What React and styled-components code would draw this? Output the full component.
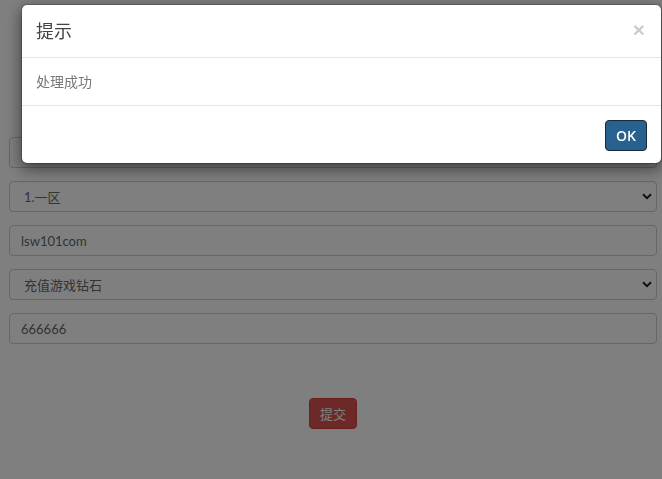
import styled, { createGlobalStyle } from 'styled-components';

const GlobalStyle = createGlobalStyle`
  html, body {
    margin: 0;
    padding: 0;
    background: #fff;
    font-family: Lato, "Noto Sans CJK SC", sans-serif;
    font-size: 14px;
    color: #555;
  }
  * { box-sizing: border-box; }
`;

const Chevron = () => (
  <ChevronIcon width="10" height="7" viewBox="0 0 10 7">
    <path d="M1 1.2 L5 5.2 L9 1.2" fill="none" stroke="#222" strokeWidth="2" />
  </ChevronIcon>
);

const App = () => {
  return (
    <>
      <GlobalStyle />
      <Page>
        <Field defaultValue="" />
        <SelectWrap>
          <Select defaultValue="1">
            <option value="1">1.一区</option>
          </Select>
          <Chevron />
        </SelectWrap>
        <Field defaultValue="lsw101com" />
        <SelectWrap>
          <Select defaultValue="d">
            <option value="d">充值游戏钻石</option>
          </Select>
          <Chevron />
        </SelectWrap>
        <Field defaultValue="666666" />
        <SubmitRow>
          <SubmitButton>提交</SubmitButton>
        </SubmitRow>
      </Page>

      <Backdrop />
      <Modal>
        <ModalHeader>
          <ModalTitle>提示</ModalTitle>
          <CloseButton>×</CloseButton>
        </ModalHeader>
        <ModalBody>处理成功</ModalBody>
        <ModalFooter>
          <OkButton>OK</OkButton>
        </ModalFooter>
      </Modal>
    </>
  );
};

const Page = styled.div`
  display: flex;
  flex-direction: column;
  gap: 13px;
  padding: 137px 5px 0 9px;
`;

const Field = styled.input`
  height: 31px;
  width: 100%;
  padding: 0 11px;
  border: 1px solid #ccc;
  border-radius: 4px;
  font-family: Lato, "Noto Sans CJK SC", sans-serif;
  font-size: 13px;
  color: #666;
  background: #fff;
`;

const SelectWrap = styled.div`
  position: relative;
`;

const Select = styled.select`
  appearance: none;
  height: 31px;
  width: 100%;
  padding: 0 14px;
  border: 1px solid #ccc;
  border-radius: 4px;
  font-family: Lato, "Noto Sans CJK SC", sans-serif;
  font-size: 13px;
  color: #666;
  background: #fff;
`;

const ChevronIcon = styled.svg`
  position: absolute;
  right: 5px;
  top: 12px;
`;

const SubmitRow = styled.div`
  display: flex;
  justify-content: center;
  padding-top: 41px;
`;

const SubmitButton = styled.button`
  height: 31px;
  width: 48px;
  padding: 0;
  border: 1px solid #d43f3a;
  border-radius: 4px;
  background: #d9534f;
  color: #fff;
  font-family: Lato, "Noto Sans CJK SC", sans-serif;
  font-size: 13px;
`;

const Backdrop = styled.div`
  position: fixed;
  inset: 0;
  background: rgba(0, 0, 0, 0.5);
`;

const Modal = styled.div`
  position: fixed;
  top: 4px;
  left: 21px;
  right: 0;
  background: #fff;
  border: 1px solid rgba(0, 0, 0, 0.2);
  border-radius: 6px;
  box-shadow: 0 5px 15px rgba(0, 0, 0, 0.5);
  background-clip: padding-box;
`;

const ModalHeader = styled.div`
  display: flex;
  justify-content: space-between;
  align-items: center;
  padding: 13px 14px;
  border-bottom: 1px solid #e5e5e5;
`;

const ModalTitle = styled.h4`
  margin: 0;
  font-size: 18px;
  font-weight: 400;
  line-height: 26px;
  color: #444;
`;

const CloseButton = styled.span`
  font-family: "Liberation Sans", sans-serif;
  font-size: 21px;
  font-weight: 700;
  line-height: 1;
  color: #000;
  opacity: 0.2;
  margin-top: -4px;
  margin-right: 2px;
`;

const ModalBody = styled.div`
  padding: 15px 14px;
  font-size: 14px;
  line-height: 17px;
  color: #777;
`;

const ModalFooter = styled.div`
  display: flex;
  justify-content: flex-end;
  padding: 14px 14px 12px;
  border-top: 1px solid #e5e5e5;
`;

const OkButton = styled.button`
  height: 31px;
  width: 42px;
  padding: 0;
  border: 1px solid #122b40;
  border-radius: 4px;
  background: #286090;
  color: #fff;
  font-family: "Open Sans", sans-serif;
  font-size: 14px;
  font-weight: 600;
`;

export default App;
